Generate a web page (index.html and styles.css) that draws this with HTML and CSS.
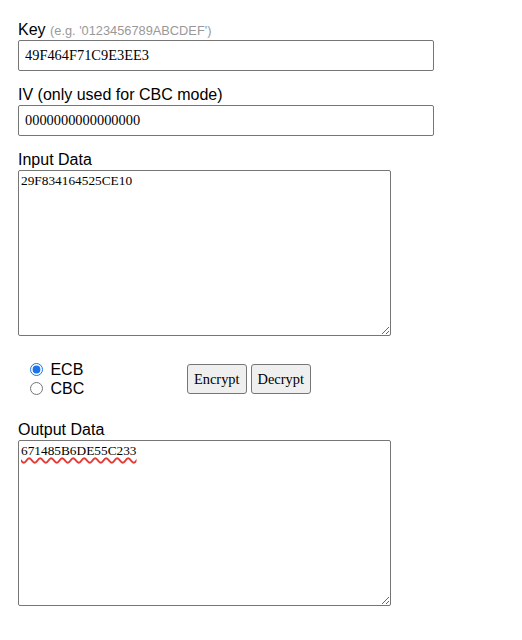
FILE: index.html
```html
<!DOCTYPE html>
<html>
<head>
<meta charset="utf-8">
<link rel="stylesheet" href="styles.css">
</head>
<body>
<div class="page">
  <div class="field">
    <label class="lbl" for="key">Key <span class="hint">(e.g. '0123456789ABCDEF')</span></label>
    <input class="txt" id="key" type="text" value="49F464F71C9E3EE3">
  </div>
  <div class="field">
    <label class="lbl" for="iv">IV (only used for CBC mode)</label>
    <input class="txt" id="iv" type="text" value="0000000000000000">
  </div>
  <div class="field">
    <label class="lbl" for="in">Input Data</label>
    <textarea class="area" id="in" spellcheck="false">29F834164525CE10</textarea>
  </div>
  <div class="controls">
    <div class="modes">
      <label class="mode"><input class="radio" type="radio" name="mode" checked> ECB</label>
      <label class="mode"><input class="radio" type="radio" name="mode"> CBC</label>
    </div>
    <div class="buttons">
      <button class="btn" type="button">Encrypt</button>
      <button class="btn" type="button">Decrypt</button>
    </div>
  </div>
  <div class="field out">
    <label class="lbl" for="out">Output Data</label>
    <textarea class="area misspelt" id="out" spellcheck="false">671485B6DE55C233</textarea>
  </div>
</div>
</body>
</html>
```
FILE: styles.css
```css
html, body {
  margin: 0;
  padding: 0;
  background: #fff;
}
body {
  font-family: "Liberation Sans", Arial, sans-serif;
  font-size: 16px;
  color: #000;
}
.page {
  padding: 21px 0 0 18px;
}
.field {
  margin-bottom: 15px;
}
.lbl {
  display: block;
  line-height: 18px;
  height: 18px;
  margin-bottom: 1px;
  white-space: nowrap;
}
.hint {
  font-size: 12.8px;
  color: #999;
}
.txt {
  display: block;
  box-sizing: border-box;
  width: 416px;
  height: 31px;
  margin: 0;
  padding: 0 6px;
  border: 1px solid #767676;
  border-radius: 2px;
  font-family: "Liberation Serif", "Times New Roman", serif;
  font-size: 14.4px;
  color: #000;
  background: #fff;
}
.area {
  display: block;
  box-sizing: border-box;
  width: 373px;
  height: 166px;
  margin: 0;
  padding: 2px;
  border: 1px solid #767676;
  border-radius: 2px;
  font-family: "Liberation Serif", "Times New Roman", serif;
  font-size: 13.33px;
  color: #000;
  background: #fff;
}
.misspelt {
  text-decoration: underline wavy #e53935;
  text-decoration-thickness: 1.5px;
  text-underline-offset: 2px;
}
.controls {
  display: flex;
  align-items: center;
  margin-top: 24px;
  margin-bottom: 23px;
}
.modes {
  display: flex;
  flex-direction: column;
  width: 162px;
  padding-left: 7px;
}
.mode {
  display: flex;
  align-items: center;
  height: 19px;
  white-space: pre;
}
.radio {
  width: 13px;
  height: 13px;
  margin: 0 3px 0 5px;
  accent-color: #1a73e8;
}
.buttons {
  display: flex;
  gap: 4px;
}
.btn {
  box-sizing: border-box;
  height: 30px;
  margin: 0;
  padding: 0 6px;
  border: 1px solid #767676;
  border-radius: 3px;
  background: #efefef;
  font-family: "Liberation Serif", "Times New Roman", serif;
  font-size: 14.4px;
  color: #000;
}
```
